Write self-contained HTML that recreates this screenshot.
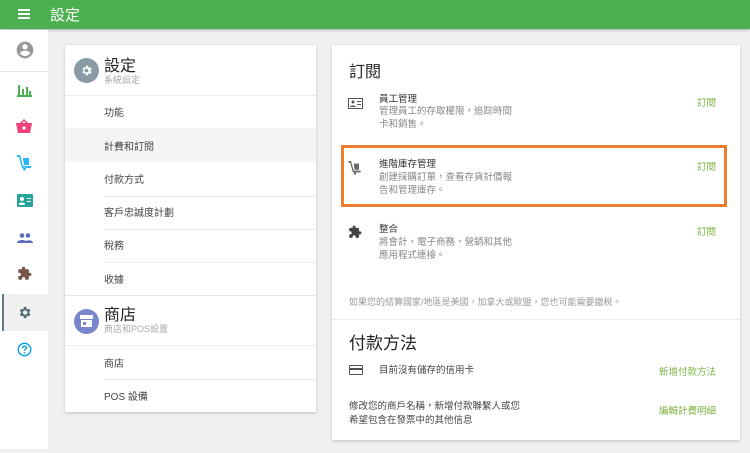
<!DOCTYPE html>
<html><head><meta charset="utf-8"><style>
*{margin:0;padding:0;box-sizing:border-box}
body{width:750px;height:453px;background:#f0f0f0;font-family:"Liberation Sans","Noto Sans CJK TC",sans-serif;position:relative;overflow:hidden;color:#333}
.abs{position:absolute}
.top{left:0;top:0;width:750px;height:29px;background:#4caf50;box-shadow:0 1px 3px rgba(0,0,0,.3)}
.side{left:0;top:30px;width:48px;height:419px;background:#fff}
.card{background:#fff;box-shadow:0 1px 3px rgba(0,0,0,.2)}
.it{position:absolute;left:39px;font-size:10px;color:#444}
.sep{position:absolute;left:39px;right:0;height:1px;background:#ececec}
.g{color:#7cb342;font-size:9.5px;position:absolute}
.d{font-size:9.5px;color:#888;line-height:13px}
</style></head><body>
<div class="abs top">
 <div class="abs" style="left:18px;top:9px;width:12px;height:2px;background:#fff;box-shadow:0 4px 0 #fff,0 8px 0 #fff"></div>
 <div class="abs" style="left:50px;top:4px;color:#fff;font-size:15px">設定</div>
</div>
<div class="abs side">
 <svg class="abs" style="left:15px;top:10px" width="20" height="20" viewBox="0 0 24 24"><path fill="#999" d="M12 2a10 10 0 100 20 10 10 0 000-20zm0 3a3.2 3.2 0 110 6.4A3.2 3.2 0 0112 5zm0 14.2a7.3 7.3 0 01-6-3.2c0-2 4-3.1 6-3.1s6 1.1 6 3.1a7.3 7.3 0 01-6 3.2z"/></svg>
 <div class="abs" style="left:0;top:41px;width:48px;height:1px;background:#e6e6e6"></div>
 <svg class="abs" style="left:17px;top:53px" width="15" height="14" viewBox="0 0 15 14"><path fill="#4caf50" d="M1 2h2v11H1zM5 6h2v7H5zM9 4h2v9H9zM12 8h2v5h-2zM0 12h15v2H0z"/></svg>
 <svg class="abs" style="left:16px;top:89px" width="16" height="14" viewBox="0 0 16 14"><path fill="#ec407a" d="M0 4h16l-2 10H2z M4 4l4-4 4 4h-2L8 2 6 4z"/><circle cx="8" cy="9" r="1.6" fill="#fff"/></svg>
 <svg class="abs" style="left:17px;top:125px" width="15" height="16" viewBox="0 0 15 16"><path fill="#29b6f6" d="M0 0h3l3 11h8v2H5L2 2H0zM6 3h6v7H7zM6 14a1.5 1.5 0 103 0 1.5 1.5 0 00-3 0z"/></svg>
 <svg class="abs" style="left:17px;top:164px" width="16" height="13" viewBox="0 0 16 13"><rect width="16" height="13" rx="1" fill="#26a69a"/><circle cx="5" cy="5" r="2" fill="#fff"/><path fill="#fff" d="M2 10c0-2 6-2 6 0v1H2zM10 4h4v1h-4zM10 7h4v1h-4z"/></svg>
 <svg class="abs" style="left:17px;top:203px" width="16" height="10" viewBox="0 0 16 10"><circle cx="5" cy="2.5" r="2.3" fill="#5c6bc0"/><circle cx="11" cy="2.5" r="2.3" fill="#5c6bc0"/><path fill="#5c6bc0" d="M0 10c0-4 10-4 10 0zM7 10c0-3 9-4 9 0z"/></svg>
 <svg class="abs" style="left:17px;top:236px" width="15" height="15" viewBox="0 0 24 24"><path fill="#795548" d="M20.5 11H19V7a2 2 0 00-2-2h-4V3.5a2.5 2.5 0 00-5 0V5H4a2 2 0 00-2 2v3.8h1.5a2.7 2.7 0 010 5.4H2V20a2 2 0 002 2h3.8v-1.5a2.7 2.7 0 015.4 0V22H17a2 2 0 002-2v-4h1.5a2.5 2.5 0 000-5z"/></svg>
 <div class="abs" style="left:2px;top:264px;width:46px;height:37px;background:#f0f0f0;border-left:2px solid #607d8b"></div>
 <svg class="abs" style="left:17px;top:275px" width="15" height="15" viewBox="0 0 24 24"><path fill="#546e7a" d="M19.4 13a7.4 7.4 0 000-2l2.1-1.6-2-3.5-2.5 1a7 7 0 00-1.700-1L15 3h-4l-.4 2.9a7 7 0 00-1.7 1l-2.5-1-2 3.5L6.5 11a7.4 7.4 0 000 2l-2.1 1.6 2 3.5 2.5-1a7 7 0 001.7 1L11 21h4l.4-2.9a7 7 0 001.7-1l2.5 1 2-3.5zM13 15.5a3.5 3.5 0 110-7 3.5 3.5 0 010 7z"/></svg>
 <svg class="abs" style="left:17px;top:312px" width="15" height="15" viewBox="0 0 24 24"><circle cx="12" cy="12" r="10" fill="none" stroke="#039be5" stroke-width="2.2"/><path d="M9 9.5a3 3 0 116 0c0 2-3 2-3 4.5" fill="none" stroke="#039be5" stroke-width="2.2"/><circle cx="12" cy="17.5" r="1.3" fill="#039be5"/></svg>
</div>

<div class="abs card" style="left:65px;top:45px;width:251px;height:367px">
 <div class="abs" style="left:9px;top:13px;width:25px;height:25px;border-radius:50%;background:#8a9ba5"></div>
 <svg class="abs" style="left:15px;top:19px" width="13" height="13" viewBox="0 0 24 24"><path fill="#fff" d="M19.4 13a7.4 7.4 0 000-2l2.1-1.6-2-3.5-2.5 1a7 7 0 00-1.7-1L15 3h-4l-.4 2.9a7 7 0 00-1.7 1l-2.5-1-2 3.5L6.5 11a7.4 7.4 0 000 2l-2.1 1.6 2 3.5 2.5-1a7 7 0 001.7 1L11 21h4l.4-2.9a7 7 0 001.7-1l2.5 1 2-3.5zM12 15.5a3.5 3.5 0 110-7 3.5 3.5 0 010 7z"/></svg>
 <div class="abs" style="left:39px;top:7px;font-size:16px;color:#222">設定</div>
 <div class="abs" style="left:39px;top:28px;font-size:9px;color:#aaa">系統設定</div>
 <div class="abs" style="left:0;top:50px;width:251px;height:1px;background:#ececec"></div>
 <div class="it" style="top:59px">功能</div>
 <div class="abs" style="left:0;top:83px;width:251px;height:34px;background:#f5f5f5"></div>
 <div class="it" style="top:93px">計費和訂閱</div>
 <div class="it" style="top:126px">付款方式</div><div class="sep" style="top:151px"></div>
 <div class="it" style="top:159px">客戶忠誠度計劃</div><div class="sep" style="top:184px"></div>
 <div class="it" style="top:192px">稅務</div><div class="sep" style="top:217px"></div>
 <div class="it" style="top:226px">收據</div>
 <div class="abs" style="left:0;top:250px;width:251px;height:1px;background:#e6e6e6"></div>
 <div class="abs" style="left:9px;top:264px;width:25px;height:25px;border-radius:50%;background:#7986cb"></div>
 <svg class="abs" style="left:15px;top:270px" width="13" height="12" viewBox="0 0 13 12"><path fill="#fff" d="M0 0h13v4H0zM1 5h11v7H1z"/><rect x="3" y="7" width="3" height="3" fill="#7986cb"/></svg>
 <div class="abs" style="left:39px;top:256px;font-size:16px;color:#222">商店</div>
 <div class="abs" style="left:39px;top:277px;font-size:9px;color:#aaa">商店和POS設置</div>
 <div class="abs" style="left:0;top:300px;width:251px;height:1px;background:#ececec"></div>
 <div class="it" style="top:310px">商店</div><div class="sep" style="top:334px"></div>
 <div class="it" style="top:343px">POS 設備</div>
</div>

<div class="abs card" style="left:332px;top:45px;width:408px;height:395px">
 <div class="abs" style="left:17px;top:13px;font-size:16px;color:#222">訂閱</div>
 <svg class="abs" style="left:16px;top:53px" width="15" height="11" viewBox="0 0 15 11"><rect x=".5" y=".5" width="14" height="10" fill="none" stroke="#555"/><circle cx="5" cy="4" r="1.5" fill="#555"/><path fill="#555" d="M2 9c0-2 6-2 6 0zM9 3h4v1H9zM9 6h4v1H9z"/></svg>
 <div class="abs" style="left:47px;top:46px;font-size:9.5px;color:#333">員工管理</div>
 <div class="abs d" style="left:47px;top:60px">管理員工的存取權限，追踪時間<br>卡和銷售。</div>
 <div class="g" style="left:365px;top:50px">訂閱</div>
 <div class="abs" style="left:9px;top:100px;width:386px;height:62px;border:3px solid #ed7d31"></div>
 <svg class="abs" style="left:16px;top:116px" width="14" height="14" viewBox="0 0 15 16"><path fill="#666" d="M0 0h3l3 11h8v2H5L2 2H0zM6 3h6v7H7zM6 14a1.5 1.5 0 103 0 1.5 1.5 0 00-3 0z"/></svg>
 <div class="abs" style="left:47px;top:111px;font-size:9.5px;color:#333">進階庫存管理</div>
 <div class="abs d" style="left:47px;top:126px">創建採購訂單，查看存貨計價報<br>告和管理庫存。</div>
 <div class="g" style="left:365px;top:114px">訂閱</div>
 <svg class="abs" style="left:16px;top:180px" width="14" height="14" viewBox="0 0 24 24"><path fill="#444" d="M20.5 11H19V7a2 2 0 00-2-2h-4V3.5a2.5 2.5 0 00-5 0V5H4a2 2 0 00-2 2v3.8h1.5a2.7 2.7 0 010 5.4H2V20a2 2 0 002 2h3.8v-1.5a2.7 2.7 0 015.4 0V22H17a2 2 0 002-2v-4h1.5a2.5 2.5 0 000-5z"/></svg>
 <div class="abs" style="left:47px;top:176px;font-size:9.5px;color:#333">整合</div>
 <div class="abs d" style="left:47px;top:191px">將會計，電子商務，營銷和其他<br>應用程式連接。</div>
 <div class="g" style="left:365px;top:179px">訂閱</div>
 <div class="abs" style="left:17px;top:250px;font-size:9px;color:#999">如果您的結算國家/地區是美國，加拿大或歐盟，您也可能需要繳稅。</div>
 <div class="abs" style="left:0;top:274px;width:408px;height:1px;background:#ececec"></div>
 <div class="abs" style="left:17px;top:284px;font-size:17px;color:#222">付款方法</div>
 <div class="abs" style="left:17px;top:320px;width:14px;height:10px;border:1.5px solid #555;border-radius:1px"><div style="margin-top:2px;height:2px;background:#555"></div></div>
 <div class="abs" style="left:47px;top:317px;font-size:9.5px;color:#444">目前沒有儲存的信用卡</div>
 <div class="g" style="left:327px;top:319px">新增付款方法</div>
 <div class="abs" style="left:17px;top:355px;font-size:9.5px;color:#444;line-height:14px">修改您的商戶名稱，新增付款聯繫人或您<br>希望包含在發票中的其他信息</div>
 <div class="g" style="left:327px;top:358px">編輯計費明細</div>
</div>
</body></html>
